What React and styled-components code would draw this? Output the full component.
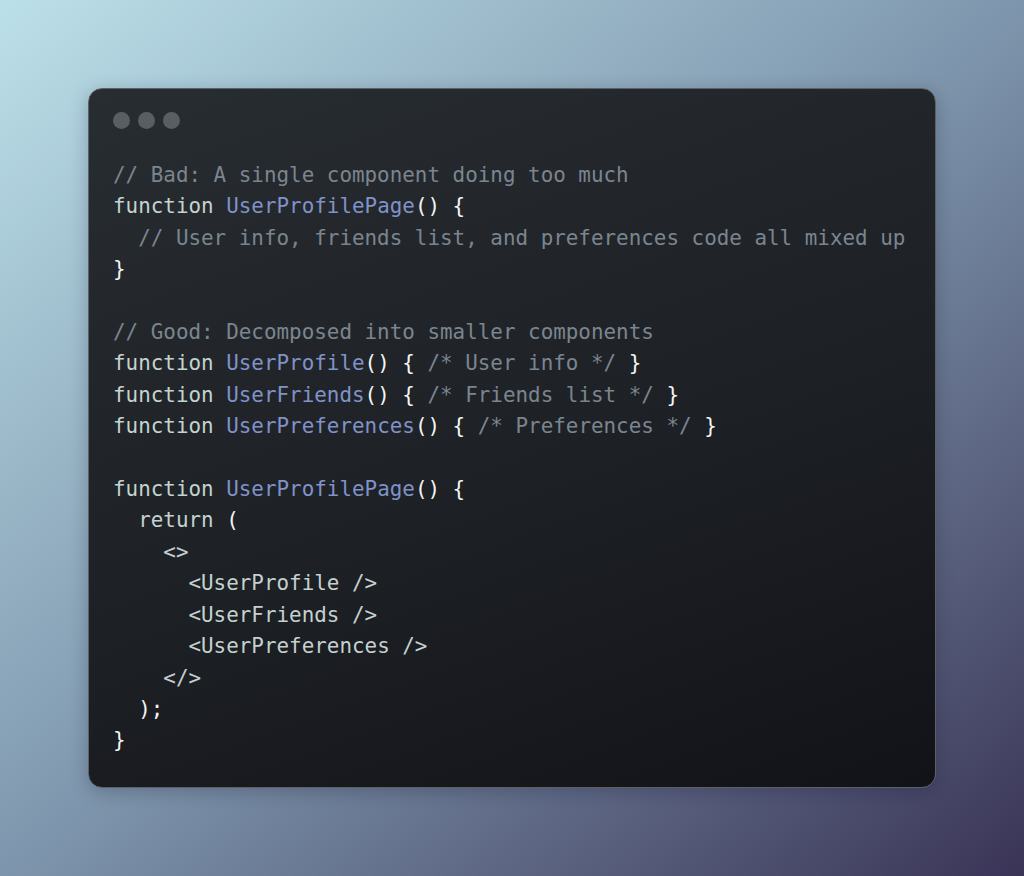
import React from 'react';
import styled, { createGlobalStyle } from 'styled-components';

const GlobalStyle = createGlobalStyle`
  html, body {
    margin: 0;
    padding: 0;
  }
`

const Page = styled.div`
  width: 100%;
  height: 876px;
  display: flex;
  align-items: center;
  justify-content: center;
  background: linear-gradient(to bottom right, #bce0e9 0%, #7e96ad 50%, #3a3457 100%);
`

const Window = styled.div`
  box-sizing: border-box;
  width: 848px;
  height: 700px;
  padding: 23px 24px 30px 24px;
  border: 1px solid #5a6168;
  border-radius: 14px;
  background: linear-gradient(160deg, #282d31 0%, #1d2024 55%, #121318 100%);
  box-shadow: 0 4px 18px rgba(20, 20, 40, 0.25);
`

const Dots = styled.div`
  display: flex;
  gap: 8px;
  height: 17px;
  margin-bottom: 31px;
`

const Dot = styled.span`
  width: 17px;
  height: 17px;
  border-radius: 50%;
  background: #595e63;
`

const Code = styled.pre`
  margin: 0;
  font-family: "DejaVu Sans Mono", "Liberation Mono", monospace;
  font-size: 20.9px;
  line-height: 31.4px;
  color: #c3d3cf;
  white-space: pre;
`

const colors = {
  comment: '#7b8590',
  kw: '#c3d3cf',
  fn: '#8092c8',
  punc: '#f4f4f4',
  tag: '#c4d1cf',
}

const Tok = styled.span`
  color: ${(p) => colors[p.$k]};
`

const C = ({ children }) => <Tok $k="comment">{children}</Tok>
const K = ({ children }) => <Tok $k="kw">{children}</Tok>
const F = ({ children }) => <Tok $k="fn">{children}</Tok>
const P = ({ children }) => <Tok $k="punc">{children}</Tok>
const T = ({ children }) => <Tok $k="tag">{children}</Tok>

const App = () => {
  return (
    <>
      <GlobalStyle />
      <Page>
        <Window>
          <Dots>
            <Dot />
            <Dot />
            <Dot />
          </Dots>
          <Code>
            <C>// Bad: A single component doing too much</C>{'\n'}
            <K>function </K><F>UserProfilePage</F><P>() {'{'}</P>{'\n'}
            <C>  // User info, friends list, and preferences code all mixed up</C>{'\n'}
            <P>{'}'}</P>{'\n'}
            {'\n'}
            <C>// Good: Decomposed into smaller components</C>{'\n'}
            <K>function </K><F>UserProfile</F><P>() {'{'} </P><C>/* User info */</C><P> {'}'}</P>{'\n'}
            <K>function </K><F>UserFriends</F><P>() {'{'} </P><C>/* Friends list */</C><P> {'}'}</P>{'\n'}
            <K>function </K><F>UserPreferences</F><P>() {'{'} </P><C>/* Preferences */</C><P> {'}'}</P>{'\n'}
            {'\n'}
            <K>function </K><F>UserProfilePage</F><P>() {'{'}</P>{'\n'}
            <K>  return </K><P>(</P>{'\n'}
            <T>    {'<>'}</T>{'\n'}
            <T>      {'<UserProfile />'}</T>{'\n'}
            <T>      {'<UserFriends />'}</T>{'\n'}
            <T>      {'<UserPreferences />'}</T>{'\n'}
            <T>    {'</>'}</T>{'\n'}
            <P>  );</P>{'\n'}
            <P>{'}'}</P>
          </Code>
        </Window>
      </Page>
    </>
  );
};

export default App;
